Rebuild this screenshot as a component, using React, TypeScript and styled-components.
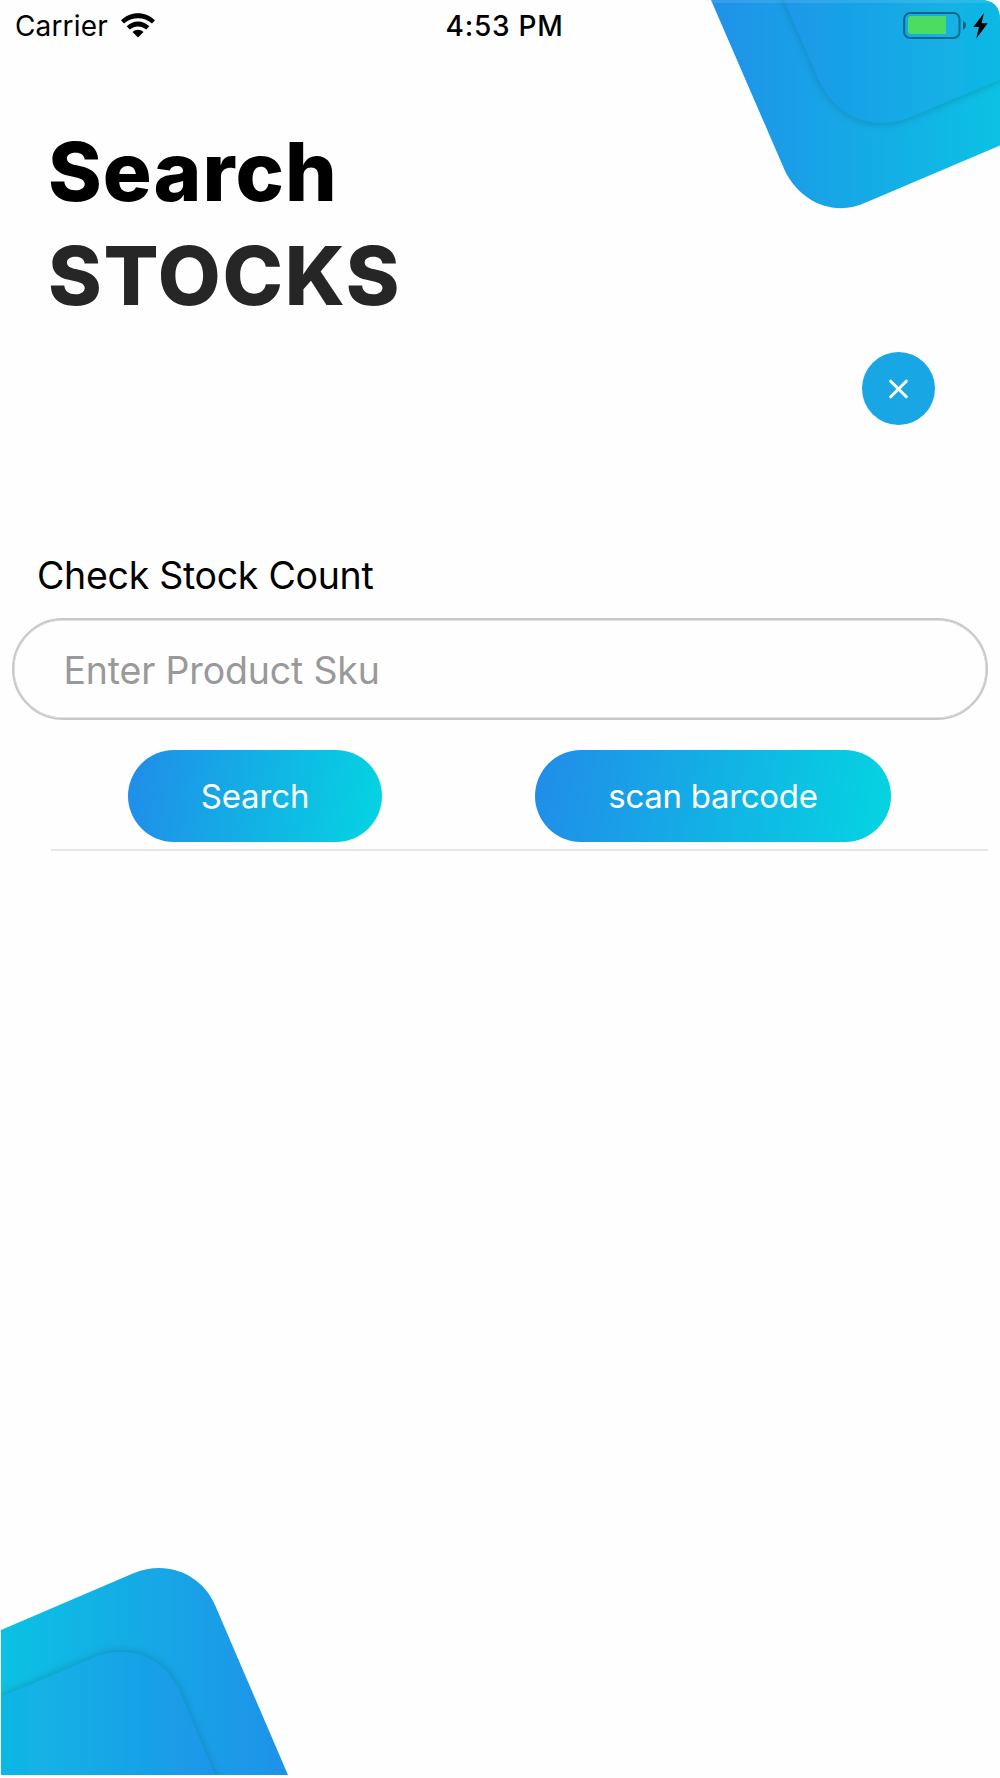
import React from "react";
import styled, { createGlobalStyle } from "styled-components";

const GlobalStyle = createGlobalStyle`
  * { box-sizing: border-box; }
  body { margin: 0; background: #fff; }
`;

const Screen = styled.main`
  position: relative;
  display: flex;
  flex-direction: column;
  width: 1000px;
  height: 1778px;
  overflow: hidden;
  background: #fefefe;
  color: #000;
  font-family: Inter, "Liberation Sans", sans-serif;
`;

const CornerArt = styled.svg<{ $corner: "top" | "bottom" }>`
  position: absolute;
  ${(p) => (p.$corner === "top" ? "top: 0; right: 0;" : "bottom: 0; left: 0;")}
  display: block;
`;

const StatusBar = styled.header`
  position: relative;
  display: grid;
  grid-template-columns: 1fr auto 1fr;
  align-items: center;
  height: 50px;
  padding: 0 11px 0 15px;
  font-size: 28px;
  line-height: 48px;
`;

const CarrierGroup = styled.div`
  display: flex;
  align-items: center;
  gap: 13px;
`;

const StatusText = styled.span<{ $weight: number }>`
  padding-top: 2px;
  font-weight: ${(p) => p.$weight};
  letter-spacing: ${(p) => (p.$weight > 400 ? 0.75 : 0.15)}px;
`;

const Clock = styled(StatusText)`
  padding-left: 5px;
`;

const BatteryGroup = styled.div`
  display: flex;
  justify-content: flex-end;
`;

const TitleRow = styled.h1`
  position: relative;
  margin: 70px 0 0 48px;
  font-size: 81.5px;
  font-weight: 800;
  line-height: 103.5px;
`;

const TitleLine = styled.span<{ $color: string; $spacing: number }>`
  display: block;
  width: max-content;
  color: ${(p) => p.$color};
  letter-spacing: ${(p) => p.$spacing}px;
`;

const CloseRow = styled.div`
  display: flex;
  justify-content: flex-end;
  margin-top: 25px;
  padding-right: 65px;
`;

const CloseButton = styled.button`
  display: flex;
  align-items: center;
  justify-content: center;
  width: 73px;
  height: 73px;
  padding: 0;
  border: 0;
  border-radius: 50%;
  background: #18a6e5;
`;

const Form = styled.form`
  display: flex;
  flex-direction: column;
  margin-top: 126px;
  padding: 0 12px;
`;

const Label = styled.label`
  width: max-content;
  margin-left: 25px;
  font-size: 37.5px;
  line-height: 50px;
  letter-spacing: -0.3px;
`;

const SkuInput = styled.input`
  height: 102px;
  margin-top: 17px;
  padding: 2px 0 0 49.5px;
  border: 2px solid #c8c8c8;
  border-radius: 51px;
  box-shadow: inset 0 0 0 0.5px #c8c8c8;
  background: transparent;
  font-family: inherit;
  font-size: 37.5px;
  letter-spacing: -0.18px;
  outline: none;
  &::placeholder {
    color: #999;
    opacity: 1;
  }
`;

const Actions = styled.div`
  display: flex;
  gap: 153px;
  margin-top: 30px;
  padding-left: 116px;
`;

const PillButton = styled.button<{ $width: number; $spacing: number }>`
  width: ${(p) => p.$width}px;
  height: 92px;
  padding: 0;
  border: 0;
  border-radius: 46px;
  background: linear-gradient(100deg, #218ce9, #04d5e1);
  color: #fff;
  font-family: inherit;
  font-size: 33px;
  letter-spacing: ${(p) => p.$spacing}px;
`;

const Divider = styled.hr`
  width: 937px;
  height: 2px;
  margin: 7px 0 0 39px;
  border: 0;
  background: #e6e6e6;
`;

function BrandGradient({ id, x1, x2 }: { id: string; x1: number; x2: number }) {
  return (
    <linearGradient id={id} gradientUnits="userSpaceOnUse" x1={x1} y1="0" x2={x2} y2="0">
      <stop offset="0" stopColor="#218ce9" />
      <stop offset="1" stopColor="#04d5e1" />
    </linearGradient>
  );
}

function TopArt() {
  return (
    <CornerArt $corner="top" width="300" height="220" viewBox="700 0 300 220" aria-hidden>
      <defs>
        <BrandGradient id="topOuter" x1={680} x2={1115} />
        <BrandGradient id="topInner" x1={705} x2={1190} />
        <clipPath id="topClip">
          <path d="M711 0H980Q1000 0 1000 20V145.500L867 202C833 218 800 201 785 171Z" />
        </clipPath>
        <filter id="topShadow" x="-20%" y="-20%" width="140%" height="140%">
          <feDropShadow dx="0" dy="1" stdDeviation="5" floodColor="#000" floodOpacity=".18" />
        </filter>
      </defs>
      <g clipPath="url(#topClip)">
        <rect x="700" width="300" height="220" fill="url(#topOuter)" />
        <path d="M779 -12L819 80C836 116 872 132 910 117L1020 71V-12Z" fill="url(#topInner)" filter="url(#topShadow)" />
        <rect x="700" width="300" height="3" fill="#fff" opacity=".1" />
      </g>
    </CornerArt>
  );
}

function BottomArt() {
  return (
    <CornerArt $corner="bottom" width="300" height="228" viewBox="0 1550 300 228" aria-hidden>
      <defs>
        <BrandGradient id="bottomOuter" x1={320} x2={-115} />
        <BrandGradient id="bottomInner" x1={280} x2={-190} />
        <clipPath id="bottomClip">
          <path d="M1 1630L134 1573C168 1559 202 1575 215 1605L288 1775H1Z" />
        </clipPath>
        <filter id="bottomShadow" x="-20%" y="-20%" width="140%" height="140%">
          <feDropShadow dx="0" dy="-1" stdDeviation="5" floodColor="#000" floodOpacity=".18" />
        </filter>
      </defs>
      <g clipPath="url(#bottomClip)">
        <rect y="1550" width="300" height="226" fill="url(#bottomOuter)" />
        <path d="M-20 1706L92 1658.500C126 1643 162 1656 179 1690L221 1790H-20Z" fill="url(#bottomInner)" filter="url(#bottomShadow)" />
      </g>
    </CornerArt>
  );
}

function WifiIcon() {
  return (
    <svg width="34" height="25" viewBox="0 0 34 25" aria-label="Wi-Fi">
      <path d="M0 7.200C9.500 -2.200 24.500 -2.200 34 7.200L31 10.600C23.200 3.400 10.800 3.400 3 10.600Z" />
      <path d="M5.700 13.200C12.200 6.800 21.800 6.800 28.300 13.200L25.200 16.600C20.400 12.400 13.600 12.400 8.800 16.600Z" />
      <path d="M11.500 19C14.700 16 19.300 16 22.500 19L17 24.500Z" />
    </svg>
  );
}

function BatteryIcon() {
  return (
    <svg width="86" height="30" viewBox="903 9 86 30" aria-label="Battery charging">
      <rect x="904.200" y="12" width="55.300" height="25" rx="6" fill="none" stroke="#000" strokeOpacity=".4" strokeWidth="2" />
      <path d="M911 15H946V33H911Q908 33 908 30V18Q908 15 911 15Z" fill="#4cdc64" />
      <path d="M963 19.500Q966 21.500 966 24.300T963 29Z" fill="#000" fillOpacity=".45" />
      <path d="M984 12L973.300 26H979L976.300 37.500L987.700 22.300H981.500Z" />
    </svg>
  );
}

export default function App() {
  return (
    <>
      <GlobalStyle />
      <Screen>
        <TopArt />
        <BottomArt />
        <StatusBar>
          <CarrierGroup>
            <StatusText $weight={400}>Carrier</StatusText>
            <WifiIcon />
          </CarrierGroup>
          <Clock as="time" $weight={550}>4:53 PM</Clock>
          <BatteryGroup>
            <BatteryIcon />
          </BatteryGroup>
        </StatusBar>
        <TitleRow>
          <TitleLine $color="#000" $spacing={1}>Search</TitleLine>
          <TitleLine $color="#262626" $spacing={1.7}>STOCKS</TitleLine>
        </TitleRow>
        <CloseRow>
          <CloseButton type="button" aria-label="Close">
            <svg width="20" height="20" viewBox="0 0 20 20" fill="none" stroke="#fff" strokeWidth="3" strokeLinecap="round">
              <path d="M1.700 2.200L17.300 17.800M17.300 2.200L1.700 17.800" />
            </svg>
          </CloseButton>
        </CloseRow>
        <Form onSubmit={(e) => e.preventDefault()}>
          <Label htmlFor="sku">Check Stock Count</Label>
          <SkuInput id="sku" placeholder="Enter Product Sku" />
          <Actions>
            <PillButton type="submit" $width={254} $spacing={-0.15}>Search</PillButton>
            <PillButton type="button" $width={356} $spacing={-0.3}>scan barcode</PillButton>
          </Actions>
          <Divider />
        </Form>
      </Screen>
    </>
  );
}
